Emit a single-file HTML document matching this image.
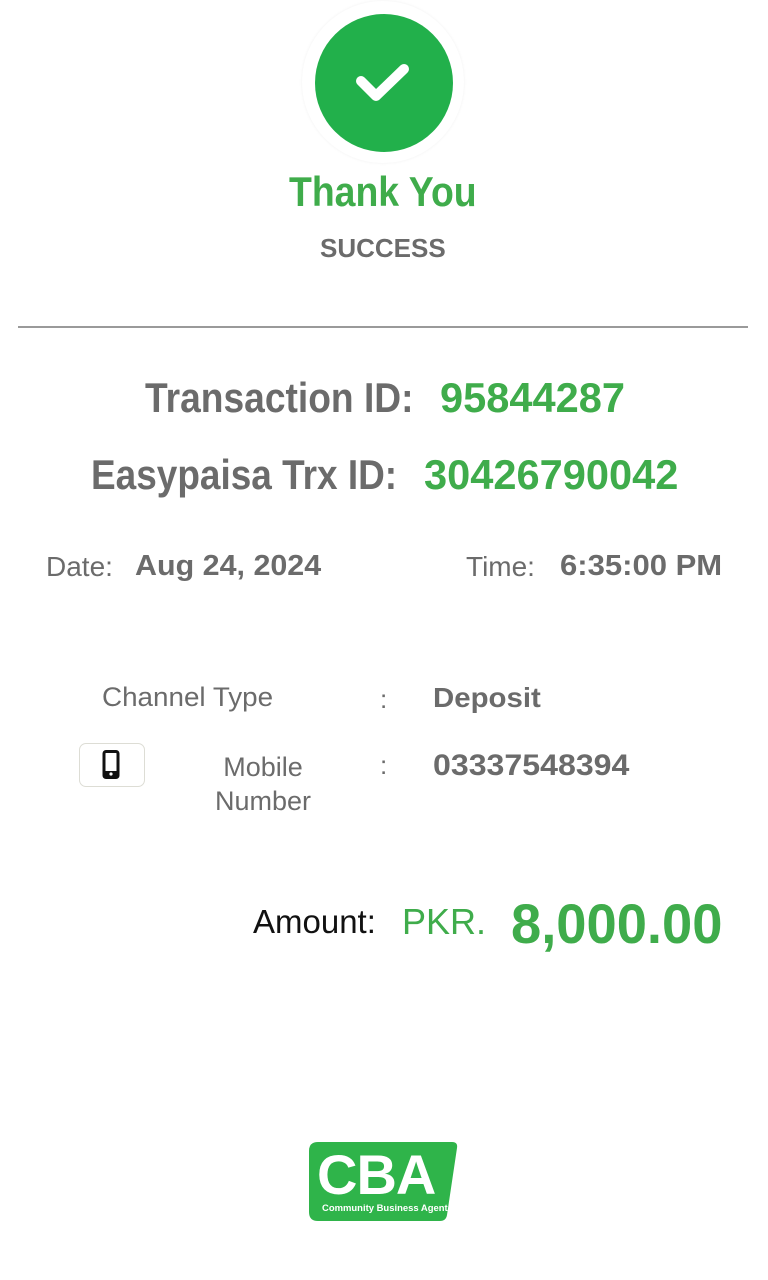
<!DOCTYPE html>
<html><head><meta charset="utf-8"><style>
body{margin:0;width:768px;height:1280px;background:#fff;position:relative;overflow:hidden;font-family:"Liberation Sans",sans-serif;}
.t{position:absolute;white-space:nowrap;line-height:1;transform-origin:left top;}
.g{color:#6b6b6b}.gr{color:#3fac4b}.b{font-weight:bold}
</style></head><body>
<div style="position:absolute;left:302px;top:1px;width:162px;height:162px;border-radius:50%;background:#fff;box-shadow:0 0 3px rgba(0,0,0,0.06)"></div>
<div style="position:absolute;left:315px;top:14px;width:138px;height:138px;border-radius:50%;background:#22b04b"></div>
<svg style="position:absolute;left:315px;top:14px" width="138" height="138"><path d="M46 67 L61 82 L89 55" fill="none" stroke="#fff" stroke-width="10" stroke-linecap="round" stroke-linejoin="round"/></svg>
<div class="t gr b" style="left:289px;top:171px;font-size:42px;transform:scaleX(.89)">Thank You</div>
<div class="t g b" style="left:320px;top:235px;font-size:26px">SUCCESS</div>
<div style="position:absolute;left:18px;top:326px;width:730px;height:2px;background:#9a9a9a"></div>
<div class="t g b" style="left:145px;top:377px;font-size:42px;transform:scaleX(.885)">Transaction ID:</div>
<div class="t gr b" style="left:440px;top:377px;font-size:42px;transform:scaleX(.99)">95844287</div>
<div class="t g b" style="left:91px;top:454px;font-size:42px;transform:scaleX(.88)">Easypaisa Trx ID:</div>
<div class="t gr b" style="left:424px;top:454px;font-size:42px;transform:scaleX(.99)">30426790042</div>
<div class="t g" style="left:46px;top:553px;font-size:28px">Date:</div>
<div class="t g b" style="left:135px;top:552px;font-size:29px;transform:scaleX(1.05)">Aug 24, 2024</div>
<div class="t g" style="left:466px;top:553px;font-size:28px">Time:</div>
<div class="t g b" style="left:560px;top:552px;font-size:29px;transform:scaleX(1.07)">6:35:00 PM</div>
<div class="t g" style="left:102px;top:684px;font-size:27px;transform:scaleX(1.03)">Channel Type</div>
<div class="t g" style="left:380px;top:686px;font-size:26px">:</div>
<div class="t g b" style="left:433px;top:684px;font-size:28px;transform:scaleX(1.05)">Deposit</div>
<div style="position:absolute;left:79px;top:743px;width:66px;height:44px;border:1px solid #ddddd5;border-radius:7px;box-sizing:border-box;background:#fff"></div>
<svg style="position:absolute;left:102px;top:750px" width="20" height="30"><rect x="2" y="1.5" width="14" height="26" rx="2" fill="none" stroke="#111" stroke-width="3"/><rect x="3" y="21" width="12" height="6" fill="#111"/><circle cx="9" cy="24" r="1.6" fill="#fff"/></svg>
<div class="t g" style="left:163px;top:750px;width:200px;text-align:center;font-size:27px;line-height:34px;white-space:normal">Mobile<br>Number</div>
<div class="t g" style="left:380px;top:752px;font-size:26px">:</div>
<div class="t g b" style="left:433px;top:751px;font-size:30px;transform:scaleX(1.07)">03337548394</div>
<div class="t" style="left:253px;top:905px;font-size:33px;color:#111">Amount:</div>
<div class="t gr" style="left:402px;top:904px;font-size:36px">PKR.</div>
<div class="t gr b" style="left:511px;top:896px;font-size:56px;transform:scaleX(.97)">8,000.00</div>
<svg style="position:absolute;left:308px;top:1141px" width="152" height="81"><path d="M10 1 H144 Q150 1 149 7 L139 74 Q138 80 132 80 H10 Q1 80 1 71 V10 Q1 1 10 1Z" fill="#2fb44a"/></svg>
<div class="t b" style="left:317px;top:1147px;font-size:56px;color:#fff;letter-spacing:-1px">CBA</div>
<div class="t b" style="left:322px;top:1204px;font-size:9px;color:#fff;transform:scaleX(1.05)">Community Business Agent</div>
</body></html>
